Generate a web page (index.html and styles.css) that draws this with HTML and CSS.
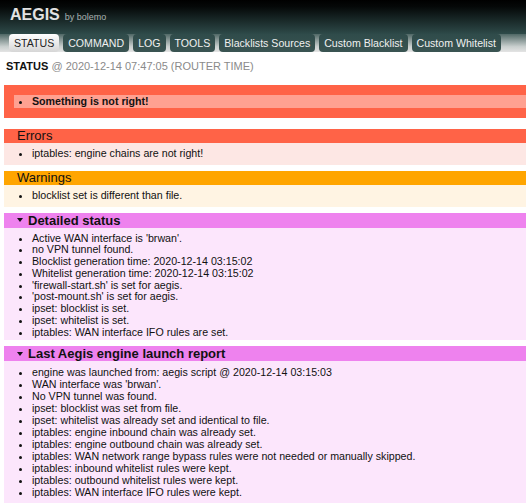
FILE: index.html
```html
<!DOCTYPE html>
<html>
<head>
<meta charset="utf-8">
<title>AEGIS</title>
<link rel="stylesheet" href="styles.css">
</head>
<body>
<header class="top">
  <div class="brand"><span class="title">AEGIS</span><span class="by">by bolemo</span></div>
  <nav class="tabs">
    <span class="tab active">STATUS</span>
    <span class="tab">COMMAND</span>
    <span class="tab">LOG</span>
    <span class="tab">TOOLS</span>
    <span class="tab">Blacklists Sources</span>
    <span class="tab">Custom Blacklist</span>
    <span class="tab">Custom Whitelist</span>
  </nav>
</header>
<main class="page">
  <div class="stamp"><b>STATUS</b> @ 2020-12-14 07:47:05 (ROUTER TIME)</div>

  <div class="alert">
    <ul class="alert-list"><li>Something is not right!</li></ul>
  </div>

  <section class="box err">
    <h3 class="box-head">Errors</h3>
    <ul class="box-list"><li>iptables: engine chains are not right!</li></ul>
  </section>

  <section class="box warn">
    <h3 class="box-head">Warnings</h3>
    <ul class="box-list"><li>blocklist set is different than file.</li></ul>
  </section>

  <section class="box info">
    <h3 class="box-head bold"><svg class="caret" width="6" height="4" viewBox="0 0 6 4"><polygon points="0,0 6,0 3,4" fill="#111"/></svg>Detailed status</h3>
    <ul class="box-list details">
      <li>Active WAN interface is 'brwan'.</li>
      <li>no VPN tunnel found.</li>
      <li>Blocklist generation time: 2020-12-14 03:15:02</li>
      <li>Whitelist generation time: 2020-12-14 03:15:02</li>
      <li>'firewall-start.sh' is set for aegis.</li>
      <li>'post-mount.sh' is set for aegis.</li>
      <li>ipset: blocklist is set.</li>
      <li>ipset: whitelist is set.</li>
      <li>iptables: WAN interface IFO rules are set.</li>
    </ul>
  </section>

  <section class="box info">
    <h3 class="box-head bold"><svg class="caret" width="6" height="4" viewBox="0 0 6 4"><polygon points="0,0 6,0 3,4" fill="#111"/></svg>Last Aegis engine launch report</h3>
    <ul class="box-list report">
      <li>engine was launched from: aegis script @ 2020-12-14 03:15:03</li>
      <li>WAN interface was 'brwan'.</li>
      <li>No VPN tunnel was found.</li>
      <li>ipset: blocklist was set from file.</li>
      <li>ipset: whitelist was already set and identical to file.</li>
      <li>iptables: engine inbound chain was already set.</li>
      <li>iptables: engine outbound chain was already set.</li>
      <li>iptables: WAN network range bypass rules were not needed or manually skipped.</li>
      <li>iptables: inbound whitelist rules were kept.</li>
      <li>iptables: outbound whitelist rules were kept.</li>
      <li>iptables: WAN interface IFO rules were kept.</li>
    </ul>
  </section>
</main>
</body>
</html>
```
FILE: styles.css
```css
html, body {
  margin: 0;
  padding: 0;
  background: #fff;
  font-family: "Liberation Sans", Arial, sans-serif;
  color: #111;
  overflow: hidden;
}

.top {
  background: #2f4f4f;
}

.brand {
  height: 34px;
  box-sizing: border-box;
  padding: 6px 0 0 10px;
  display: flex;
  align-items: baseline;
  gap: 5px;
  background: linear-gradient(#000 0%, #050808 20%, #2e4a49 100%);
}

.title {
  font-size: 16px;
  font-weight: bold;
  color: #e2e2e2;
}

.by {
  font-size: 9px;
  color: #a9b1b0;
}

.tabs {
  display: flex;
  height: 18px;
  padding-left: 9px;
  gap: 4px;
  background: linear-gradient(#506866, #c9cfce 70%, #e4e4e4);
}

.tab {
  padding: 0 5px;
  line-height: 18px;
  font-size: 10.6px;
  color: #f0f0f0;
  background: linear-gradient(#2f4b4a, #3a5452);
  border-radius: 4px;
  white-space: nowrap;
}

.tab.active {
  background: linear-gradient(#ffffff, #d6d6d6);
  color: #222;
}

.page {
  padding-left: 4px;
}

.stamp {
  font-size: 11px;
  color: #8a8a8a;
  padding: 8px 0 0 2px;
  height: 21px;
  margin-bottom: 4px;
  line-height: 13px;
}

.stamp b {
  color: #111;
}

.alert {
  background: #ff6347;
  padding: 10px 0 10px 10px;
  margin-bottom: 11px;
}

.alert-list {
  margin: 0;
  padding-left: 18px;
  background: #ffa191;
  font-size: 10.67px;
  font-weight: bold;
  line-height: 13px;
}

.box {
  margin-bottom: 6px;
}

.box-head {
  margin: 0;
  padding-left: 13px;
  font-size: 13px;
  font-weight: normal;
  line-height: 14px;
  height: 14px;
  display: flex;
  align-items: center;
}

.box-head.bold {
  font-weight: bold;
  height: 15px;
  line-height: 15px;
}

.caret {
  margin-right: 5px;
  flex: none;
}

.box-list {
  margin: 0;
  padding: 5px 0 5px 28px;
  font-size: 10.67px;
  line-height: 11.75px;
  white-space: nowrap;
}

.box-list.details {
  padding-bottom: 2px;
}

.box-list.report {
  line-height: 12px;
}

.err .box-head { background: #ff6347; }
.err .box-list { background: #fde7e4; }

.warn .box-head { background: #ffa500; }
.warn .box-list { background: #fff4e3; }

.info .box-head { background: #ee82ee; }
.info .box-list { background: #fce6fc; }
```
